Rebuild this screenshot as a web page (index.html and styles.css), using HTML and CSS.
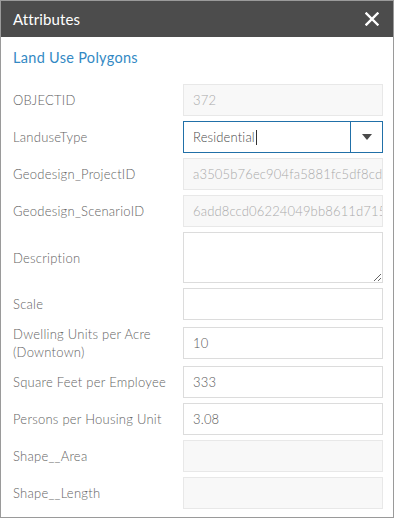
FILE: index.html
```html
<!DOCTYPE html>
<html>
<head>
<meta charset="utf-8">
<link rel="stylesheet" href="styles.css">
</head>
<body>
<div class="panel">
  <div class="header">
    <span class="title">Attributes</span>
    <svg class="close" width="14" height="14" viewBox="0 0 14 14"><path d="M1.5 1.5 L12.5 12.5 M12.5 1.5 L1.5 12.5" stroke="#fff" stroke-width="2.4" stroke-linecap="square"/></svg>
  </div>
  <div class="body">
    <div class="layer">Land Use Polygons</div>
    <div class="form">
      <div class="label">OBJECTID</div>
      <div class="box disabled">372</div>

      <div class="label">LanduseType</div>
      <div class="box select"><span class="sel-text">Residential<span class="caret"></span></span><span class="sel-btn"><svg width="10" height="6" viewBox="0 0 10 6"><path d="M0 0 H10 L5 6 Z" fill="#4a4a4a"/></svg></span></div>

      <div class="label">Geodesign_ProjectID</div>
      <div class="box disabled clip">a3505b76ec904fa5881fc5df8cdc</div>

      <div class="label">Geodesign_ScenarioID</div>
      <div class="box disabled clip">6add8ccd06224049bb8611d715</div>

      <div class="label">Description</div>
      <textarea class="box area"></textarea>

      <div class="label">Scale</div>
      <div class="box"></div>

      <div class="label two">Dwelling Units per Acre<br>(Downtown)</div>
      <div class="box">10</div>

      <div class="label">Square Feet per Employee</div>
      <div class="box">333</div>

      <div class="label">Persons per Housing Unit</div>
      <div class="box">3.08</div>

      <div class="label">Shape__Area</div>
      <div class="box disabled"></div>

      <div class="label">Shape__Length</div>
      <div class="box disabled"></div>
    </div>
  </div>
</div>
</body>
</html>
```

FILE: styles.css
```css
html, body {
  margin: 0;
  padding: 0;
  background: #fff;
}
body {
  font-family: "Lato", "Open Sans", sans-serif;
  width: 394px;
  height: 518px;
  overflow: hidden;
}
.panel {
  box-sizing: border-box;
  width: 394px;
  height: 518px;
  border: 1px solid #9a9a9a;
  display: flex;
  flex-direction: column;
}
.header {
  height: 36px;
  background: #4c4c4c;
  display: flex;
  align-items: center;
  justify-content: space-between;
  padding: 0 14px 0 12px;
  flex-shrink: 0;
}
.title {
  color: #fff;
  font-size: 15px;
  letter-spacing: 0.1px;
}
.close {
  display: block;
}
.body {
  padding: 0 9px 0 12px;
}
.layer {
  color: #3389c4;
  font-size: 14.5px;
  height: 47px;
  line-height: 16px;
  padding-top: 13px;
  box-sizing: border-box;
  letter-spacing: 0.3px;
}
.form {
  display: grid;
  grid-template-columns: 170px 200px;
  row-gap: 5px;
  align-items: center;
}
.label {
  color: #636363;
  font-size: 13px;
  font-weight: 300;
  line-height: 18px;
  letter-spacing: 0.25px;
}
.box {
  box-sizing: border-box;
  height: 32px;
  width: 200px;
  border: 1px solid #dcdcdc;
  background: #fff;
  color: #5a5a5a;
  font-family: inherit;
  font-size: 13px;
  font-weight: 300;
  letter-spacing: 0.15px;
  line-height: 30px;
  padding: 0 9px;
  white-space: nowrap;
  overflow: hidden;
  margin: 0;
}
.disabled {
  background: #f8f8f8;
  border-color: #e8e8e8;
  color: #aaaaaa;
}
.clip {
  text-overflow: clip;
}
.area {
  height: 51px;
  resize: both;
  display: block;
  outline: none;
}
.select {
  border-color: #2170a8;
  display: flex;
  padding: 0;
  color: #4a4a4a;
}
.sel-text {
  flex: 1;
  padding-left: 9px;
  display: flex;
  align-items: center;
}
.caret {
  display: inline-block;
  width: 1px;
  height: 15px;
  background: #333;
  margin-left: 1px;
}
.sel-btn {
  width: 31px;
  border-left: 1px solid #2170a8;
  display: flex;
  align-items: center;
  justify-content: center;
}
.sel-btn svg {
  display: block;
}
```
